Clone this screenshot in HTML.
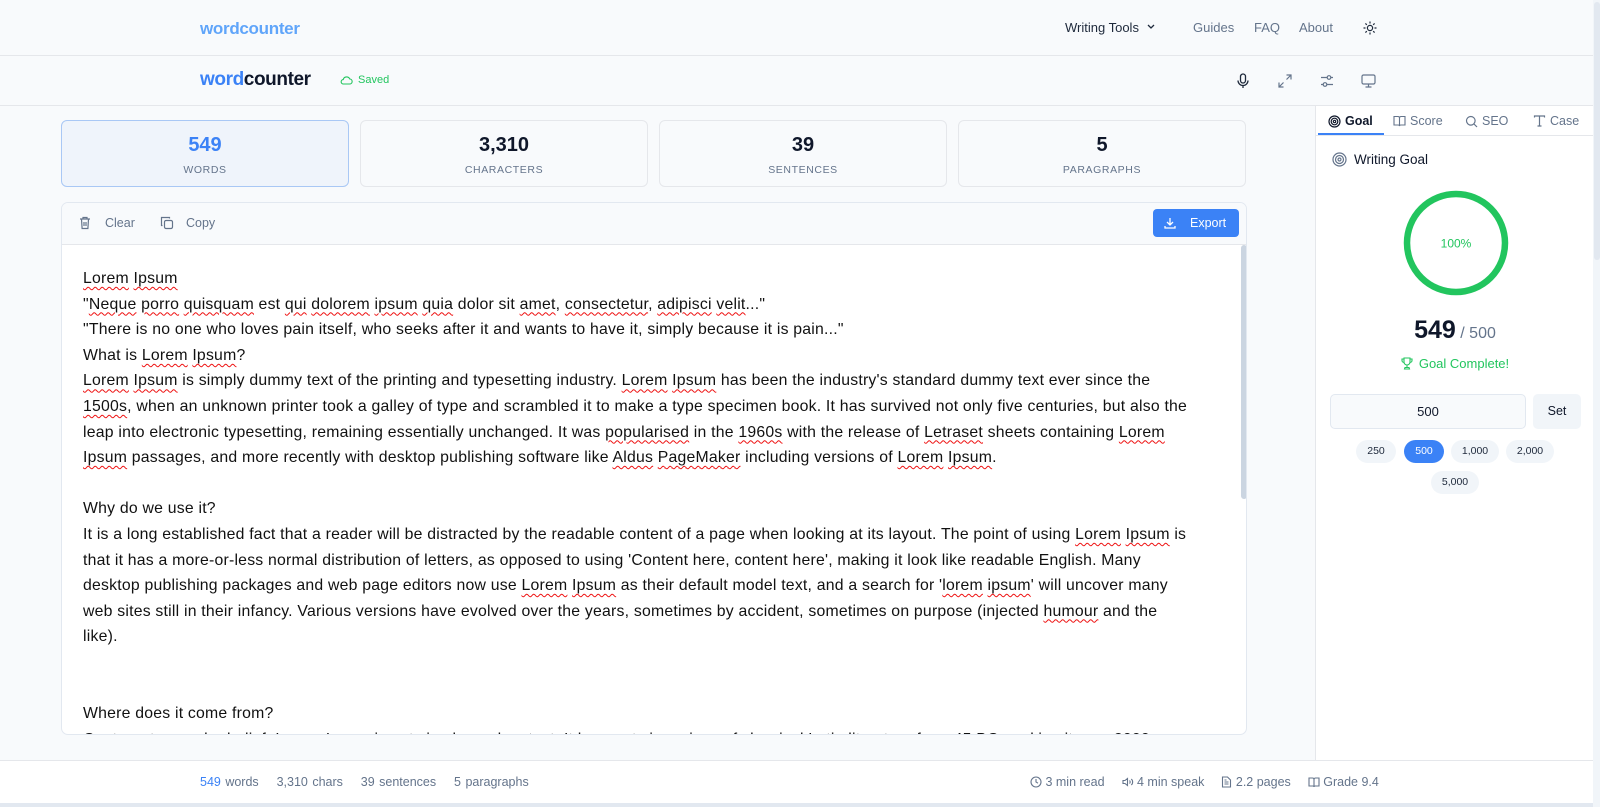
<!DOCTYPE html>
<html><head><meta charset="utf-8"><style>
*{box-sizing:border-box;margin:0;padding:0}
body{width:1600px;height:807px;overflow:hidden;background:#f8fafc;font-family:"Liberation Sans",sans-serif;color:#0f172a;position:relative}
.abs{position:absolute}
.hdr{left:0;top:0;width:1593px;height:56px;border-bottom:1px solid #e5e7eb;background:#f8fafc}
.hdr2{left:0;top:56px;width:1593px;height:50px;border-bottom:1px solid #e5e7eb;background:#f8fafc}
.nav{font-size:13px;color:#64748b;top:20px}
.card{top:120px;width:288px;height:67px;border:1px solid #e5e7eb;border-radius:6px;background:#f8fafc;text-align:center}
.card .n{font-size:20px;font-weight:bold;margin-top:13px;color:#0f172a}
.card .l{font-size:10.5px;letter-spacing:.6px;color:#64748b;margin-top:7px}
.ed{left:61px;top:202px;width:1186px;height:533px;border:1px solid #e2e8f0;border-radius:7px;background:#fff;overflow:hidden}
.tb{height:42px;background:#f8fafc;border-bottom:1px solid #e5e7eb;position:relative}
.txt{position:absolute;left:21px;top:63px;font-size:15.8px;letter-spacing:.22px;line-height:25.6px;color:#111;white-space:nowrap}
.s{text-decoration:underline wavy #e11;text-decoration-thickness:1px;text-underline-offset:3px}
.rp{left:1315px;top:106px;width:278px;height:654px;background:#fff;border-left:1px solid #e5e7eb}
.tab{top:8px;font-size:12.5px;color:#64748b;display:flex;align-items:center;gap:4px}
.chip{height:23px;border-radius:12px;background:#f1f5f9;font-size:10.5px;color:#1e293b;text-align:center;line-height:23px}
.ft{left:0;top:760px;width:1593px;height:43px;background:#fff;border-top:1px solid #e5e7eb;font-size:12.5px;color:#64748b}
svg{display:block}
</style></head><body>
<div class="abs hdr">
 <div class="abs" style="left:200px;top:19px;font-size:17px;font-weight:bold;color:#60a5fa;letter-spacing:-.3px">wordcounter</div>
 <div class="abs nav" style="left:1065px;color:#1e293b">Writing Tools</div>
 <svg class="abs" style="left:1146px;top:23px" width="10" height="8" viewBox="0 0 10 8"><path d="M2 2l3 3 3-3" stroke="#1e293b" stroke-width="1.3" fill="none"/></svg>
 <div class="abs nav" style="left:1193px">Guides</div>
 <div class="abs nav" style="left:1254px">FAQ</div>
 <div class="abs nav" style="left:1299px">About</div>
 <svg class="abs" style="left:1363px;top:21px" width="14" height="14" viewBox="0 0 14 14" stroke="#1e293b" stroke-width="1.2" fill="none"><circle cx="7" cy="7" r="2.6"/><path d="M7 0.5v2M7 11.5v2M0.5 7h2M11.5 7h2M2.4 2.4l1.4 1.4M10.2 10.2l1.4 1.4M2.4 11.6l1.4-1.4M10.2 3.8l1.4-1.4"/></svg>
</div>
<div class="abs hdr2">
 <div class="abs" style="left:200px;top:13px;font-size:19px;font-weight:bold;letter-spacing:-.4px"><span style="color:#3b82f6">word</span><span style="color:#0f172a">counter</span></div>
 <svg class="abs" style="left:340px;top:19px" width="13" height="10" viewBox="0 0 13 10"><path d="M3.5 9h6a2.5 2.5 0 0 0 .3-5A3.5 3.5 0 0 0 3.2 4.6 2.2 2.2 0 0 0 3.5 9z" stroke="#22c55e" stroke-width="1.1" fill="none"/></svg>
 <div class="abs" style="left:358px;top:18px;font-size:11px;color:#22c55e">Saved</div>
 <svg class="abs" style="left:1236px;top:17px" width="14" height="16" viewBox="0 0 14 16" stroke="#1e293b" stroke-width="1.3" fill="none"><rect x="4.5" y="1" width="5" height="9" rx="2.5"/><path d="M2 7.5a5 5 0 0 0 10 0M7 12.5v2.5"/></svg>
 <svg class="abs" style="left:1278px;top:18px" width="14" height="14" viewBox="0 0 14 14" stroke="#64748b" stroke-width="1.2" fill="none"><path d="M8.5 1h4.5v4.5M13 1L8.5 5.5M5.5 13H1V8.5M1 13l4.5-4.5"/></svg>
 <svg class="abs" style="left:1320px;top:18px" width="14" height="14" viewBox="0 0 14 14" stroke="#64748b" stroke-width="1.2" fill="none"><path d="M1 3.5h6M11 3.5h2M1 10.5h2M7 10.5h6"/><circle cx="9" cy="3.5" r="1.8"/><circle cx="5" cy="10.5" r="1.8"/></svg>
 <svg class="abs" style="left:1361px;top:18px" width="15" height="14" viewBox="0 0 15 14" stroke="#64748b" stroke-width="1.2" fill="none"><rect x="1" y="1" width="13" height="9" rx="1.5"/><path d="M7.5 10v3M4.5 13h6"/></svg>
</div>

<div class="abs card" style="left:61px;background:#eff4fb;border-color:#a9c8f5"><div class="n" style="color:#3b82f6">549</div><div class="l">WORDS</div></div>
<div class="abs card" style="left:360px"><div class="n">3,310</div><div class="l">CHARACTERS</div></div>
<div class="abs card" style="left:659px"><div class="n">39</div><div class="l">SENTENCES</div></div>
<div class="abs card" style="left:958px"><div class="n">5</div><div class="l">PARAGRAPHS</div></div>

<div class="abs ed">
 <div class="tb">
  <svg class="abs" style="left:17px;top:13px" width="12" height="14" viewBox="0 0 12 14" stroke="#64748b" stroke-width="1.2" fill="none"><path d="M1 3h10M4 3V1.5h4V3M2.5 3l.6 9.5h5.8L9.5 3M5 6v4M7 6v4"/></svg>
  <div class="abs" style="left:43px;top:13px;font-size:12.5px;color:#64748b">Clear</div>
  <svg class="abs" style="left:98px;top:13px" width="14" height="14" viewBox="0 0 14 14" stroke="#64748b" stroke-width="1.2" fill="none"><rect x="4.5" y="4.5" width="8" height="8" rx="1.5"/><path d="M2.5 9.5h-1V1.5h8v1"/></svg>
  <div class="abs" style="left:124px;top:13px;font-size:12.5px;color:#64748b">Copy</div>
  <div class="abs" style="left:1091px;top:6px;width:86px;height:28px;background:#3b82f6;border-radius:4px;color:#fff;font-size:12.5px">
   <svg class="abs" style="left:11px;top:8px" width="12" height="12" viewBox="0 0 12 12" stroke="#fff" stroke-width="1.3" fill="none"><path d="M6 1v7M3 5l3 3 3-3M1 9v2h10V9"/></svg>
   <span class="abs" style="left:37px;top:7px">Export</span></div>
 </div>
 <div class="txt">
<div><span class="s">Lorem</span> <span class="s">Ipsum</span></div>
<div>"<span class="s">Neque</span> <span class="s">porro</span> <span class="s">quisquam</span> est <span class="s">qui</span> <span class="s">dolorem</span> <span class="s">ipsum</span> <span class="s">quia</span> dolor sit <span class="s">amet</span>, <span class="s">consectetur</span>, <span class="s">adipisci</span> <span class="s">velit</span>..."</div>
<div>"There is no one who loves pain itself, who seeks after it and wants to have it, simply because it is pain..."</div>
<div>What is <span class="s">Lorem</span> <span class="s">Ipsum</span>?</div>
<div><span class="s">Lorem</span> <span class="s">Ipsum</span> is simply dummy text of the printing and typesetting industry. <span class="s">Lorem</span> <span class="s">Ipsum</span> has been the industry's standard dummy text ever since the</div>
<div><span class="s">1500s</span>, when an unknown printer took a galley of type and scrambled it to make a type specimen book. It has survived not only five centuries, but also the</div>
<div>leap into electronic typesetting, remaining essentially unchanged. It was <span class="s">popularised</span> in the <span class="s">1960s</span> with the release of <span class="s">Letraset</span> sheets containing <span class="s">Lorem</span></div>
<div><span class="s">Ipsum</span> passages, and more recently with desktop publishing software like <span class="s">Aldus</span> <span class="s">PageMaker</span> including versions of <span class="s">Lorem</span> <span class="s">Ipsum</span>.</div>
<div>&nbsp;</div>
<div>Why do we use it?</div>
<div>It is a long established fact that a reader will be distracted by the readable content of a page when looking at its layout. The point of using <span class="s">Lorem</span> <span class="s">Ipsum</span> is</div>
<div>that it has a more-or-less normal distribution of letters, as opposed to using 'Content here, content here', making it look like readable English. Many</div>
<div>desktop publishing packages and web page editors now use <span class="s">Lorem</span> <span class="s">Ipsum</span> as their default model text, and a search for '<span class="s">lorem</span> <span class="s">ipsum</span>' will uncover many</div>
<div>web sites still in their infancy. Various versions have evolved over the years, sometimes by accident, sometimes on purpose (injected <span class="s">humour</span> and the</div>
<div>like).</div>
<div>&nbsp;</div>
<div>&nbsp;</div>
<div>Where does it come from?</div>
<div>Contrary to popular belief, Lorem Ipsum is not simply random text. It has roots in a piece of classical Latin literature from 45 BC, making it over 2000</div>
 </div>
 <div class="abs" style="left:1179px;top:42px;width:6px;height:254px;background:#cbd5e1;border-radius:3px"></div>
</div>

<div class="abs rp">
 <div class="abs" style="left:0;top:0;width:277px;height:30px;border-bottom:1px solid #e5e7eb"></div>
 <div class="abs" style="left:2px;top:27px;width:66px;height:2px;background:#3b82f6"></div>
 <div class="abs tab" style="left:12px;color:#0f172a;font-weight:bold"><svg width="13" height="13" viewBox="0 0 13 13" stroke="#0f172a" stroke-width="1.2" fill="none"><circle cx="6.5" cy="6.5" r="5.5"/><circle cx="6.5" cy="6.5" r="3.3"/><circle cx="6.5" cy="6.5" r="1.2"/></svg>Goal</div>
 <div class="abs tab" style="left:77px"><svg width="13" height="12" viewBox="0 0 13 12" stroke="#64748b" stroke-width="1.1" fill="none"><path d="M1 1.5h4a1.5 1.5 0 0 1 1.5 1.5v8a1.2 1.2 0 0 0-1.2-1H1zM12 1.5H8A1.5 1.5 0 0 0 6.5 3v8a1.2 1.2 0 0 1 1.2-1H12z"/></svg>Score</div>
 <div class="abs tab" style="left:149px"><svg width="13" height="13" viewBox="0 0 13 13" stroke="#64748b" stroke-width="1.2" fill="none"><circle cx="5.8" cy="5.8" r="4.3"/><path d="M9 9l3 3"/></svg>SEO</div>
 <div class="abs tab" style="left:217px"><svg width="13" height="12" viewBox="0 0 13 12" stroke="#64748b" stroke-width="1.2" fill="none"><path d="M1.5 2.5V1h10v1.5M6.5 1v10M4.5 11h4"/></svg>Case</div>
 <svg class="abs" style="left:16px;top:46px" width="15" height="15" viewBox="0 0 15 15" stroke="#64748b" stroke-width="1.2" fill="none"><circle cx="7.5" cy="7.5" r="6.5"/><circle cx="7.5" cy="7.5" r="4"/><circle cx="7.5" cy="7.5" r="1.5"/></svg>
 <div class="abs" style="left:38px;top:46px;font-size:13.5px;color:#0f172a">Writing Goal</div>
 <svg class="abs" style="left:85px;top:82px" width="110" height="110" viewBox="0 0 110 110"><circle cx="55" cy="55" r="49" stroke="#22c55e" stroke-width="6.5" fill="none"/><text x="55" y="59.5" text-anchor="middle" font-family="Liberation Sans" font-size="12" fill="#22c55e">100%</text></svg>
 <div class="abs" style="left:0;width:278px;top:210px;text-align:center"><span style="font-size:25px;font-weight:bold;color:#0f172a">549</span><span style="font-size:16px;color:#64748b"> / 500</span></div>
 <div class="abs" style="left:0;width:278px;top:250px;text-align:center;font-size:13px;color:#22c55e"><svg style="display:inline-block;vertical-align:-2px;margin-right:6px" width="12" height="13" viewBox="0 0 12 13" stroke="#22c55e" stroke-width="1.1" fill="none"><path d="M3 1h6v4a3 3 0 0 1-6 0zM3 2H1v1.5A2 2 0 0 0 3 5.5M9 2h2v1.5A2 2 0 0 1 9 5.5M6 8v2.5M3.5 12h5l-.5-1.5h-4z"/></svg>Goal Complete!</div>
 <div class="abs" style="left:14px;top:288px;width:196px;height:35px;border:1px solid #e2e8f0;border-radius:5px;background:#f8fafc;text-align:center;line-height:33px;font-size:13px">500</div>
 <div class="abs" style="left:217px;top:288px;width:48px;height:35px;border-radius:5px;background:#f1f5f9;text-align:center;line-height:35px;font-size:12.5px">Set</div>
 <div class="abs chip" style="left:40px;top:334px;width:40px">250</div>
 <div class="abs chip" style="left:88px;top:334px;width:40px;background:#3b82f6;color:#fff">500</div>
 <div class="abs chip" style="left:135px;top:334px;width:48px">1,000</div>
 <div class="abs chip" style="left:190px;top:334px;width:48px">2,000</div>
 <div class="abs chip" style="left:115px;top:365px;width:48px">5,000</div>
</div>

<div class="abs ft">
 <div class="abs" style="left:200px;top:14px;word-spacing:1px"><span style="color:#3b82f6">549</span> words &nbsp;&nbsp; 3,310 chars &nbsp;&nbsp; 39 sentences &nbsp;&nbsp; 5 paragraphs</div>
 <div class="abs" style="left:1030px;top:14px;display:flex;gap:17px;align-items:center">
  <span><svg style="display:inline-block;vertical-align:-2px" width="12" height="12" viewBox="0 0 12 12" stroke="#64748b" stroke-width="1.1" fill="none"><circle cx="6" cy="6" r="5"/><path d="M6 3v3l2 1.2"/></svg> 3 min read</span>
  <span><svg style="display:inline-block;vertical-align:-2px" width="12" height="12" viewBox="0 0 12 12" stroke="#64748b" stroke-width="1.1" fill="none"><path d="M1 4.5h2l2.5-2v7L3 7.5H1zM7.5 4.5a2 2 0 0 1 0 3M9.3 3a4 4 0 0 1 0 6"/></svg> 4 min speak</span>
  <span><svg style="display:inline-block;vertical-align:-2px" width="11" height="12" viewBox="0 0 11 12" stroke="#64748b" stroke-width="1.1" fill="none"><path d="M1.5 1h5l3 3v7h-8zM3.5 6h4M3.5 8h4M3.5 4h2"/></svg> 2.2 pages</span>
  <span><svg style="display:inline-block;vertical-align:-2px" width="12" height="11" viewBox="0 0 12 11" stroke="#64748b" stroke-width="1.1" fill="none"><path d="M1 1h3.5A1.5 1.5 0 0 1 6 2.5V10a1 1 0 0 0-1-1H1zM11 1H7.5A1.5 1.5 0 0 0 6 2.5V10a1 1 0 0 1 1-1h4z"/></svg> Grade 9.4</span>
 </div>
</div>
<div class="abs" style="left:0;top:803px;width:1600px;height:4px;background:#e2e8f0"></div>
<div class="abs" style="left:1593px;top:0;width:7px;height:807px;background:#f1f5f9"></div>
<div class="abs" style="left:1594px;top:2px;width:6px;height:258px;background:#e2e8f0;border-radius:3px"></div>
</body></html>
